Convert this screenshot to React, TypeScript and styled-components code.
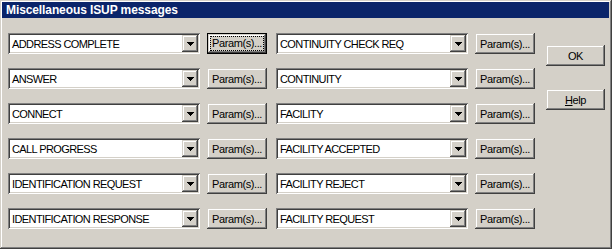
import React from "react";
import styled, { createGlobalStyle, css } from "styled-components";

const GlobalStyle = createGlobalStyle`
  html, body {
    margin: 0;
    padding: 0;
    background: #d4d0c8;
  }
  body {
    font-family: "Liberation Sans", Arial, sans-serif;
    font-size: 11px;
  }
`;

const raised = css`
  box-shadow: inset -1px -1px #404040, inset 1px 1px #d4d0c8,
    inset -2px -2px #808080, inset 2px 2px #ffffff;
`;

const Window = styled.div`
  box-sizing: border-box;
  width: 612px;
  height: 249px;
  padding: 2px 3px 3px 2px;
  background: #d4d0c8;
  display: flex;
  flex-direction: column;
  ${raised};
`;

const TitleBar = styled.div`
  height: 16px;
  line-height: 16px;
  padding-left: 4px;
  background: #0a246a;
  color: #ffffff;
  font-weight: bold;
  font-size: 12px;
  letter-spacing: -0.1px;
  white-space: nowrap;
`;

const Client = styled.div`
  display: flex;
  padding: 15px 0 0 6px;
`;

const Rows = styled.div`
  display: flex;
  flex-direction: column;
  gap: 14px;
`;

const Row = styled.div`
  display: flex;
  align-items: center;
  height: 21px;
`;

const Combo = styled.div<{ $gapAfter: number }>`
  box-sizing: border-box;
  width: 192px;
  height: 21px;
  margin-right: ${(p) => p.$gapAfter}px;
  background: #ffffff;
  display: flex;
  align-items: center;
  box-shadow: inset 1px 1px #808080, inset -1px -1px #ffffff,
    inset 2px 2px #404040, inset -2px -2px #d4d0c8;
  padding: 2px;
`;

const ComboText = styled.span`
  flex: 1;
  padding-left: 2px;
  color: #000000;
  letter-spacing: -0.6px;
  white-space: nowrap;
  overflow: hidden;
`;

const DropButton = styled.div`
  box-sizing: border-box;
  width: 16px;
  height: 17px;
  background: #d4d0c8;
  display: flex;
  align-items: center;
  justify-content: center;
  ${raised};
`;

const ArrowIcon = styled.svg`
  display: block;
  margin-top: 1px;
`;

const Button = styled.div<{ $width: number; $focused?: boolean; $gapAfter?: number }>`
  box-sizing: border-box;
  width: ${(p) => p.$width}px;
  height: 21px;
  margin-right: ${(p) => p.$gapAfter ?? 0}px;
  background: #d4d0c8;
  color: #000000;
  letter-spacing: -0.4px;
  display: flex;
  align-items: center;
  justify-content: center;
  white-space: nowrap;
  ${raised};
  ${(p) =>
    p.$focused &&
    css`
      border: 1px solid #000000;
    `}
`;

const FocusRect = styled.span`
  outline: 1px dotted #000000;
  padding: 0 1px;
  line-height: 13px;
`;

const Side = styled.div`
  display: flex;
  flex-direction: column;
  gap: 23px;
  padding-top: 12px;
  margin-left: 11px;
`;

const left = [
  "ADDRESS COMPLETE",
  "ANSWER",
  "CONNECT",
  "CALL PROGRESS",
  "IDENTIFICATION REQUEST",
  "IDENTIFICATION RESPONSE",
];

const right = [
  "CONTINUITY CHECK REQ",
  "CONTINUITY",
  "FACILITY",
  "FACILITY ACCEPTED",
  "FACILITY REJECT",
  "FACILITY REQUEST",
];

const DownArrow = () => (
  <ArrowIcon width="7" height="4" viewBox="0 0 7 4" shapeRendering="crispEdges">
    <rect x="0" y="0" width="7" height="1" fill="#000" />
    <rect x="1" y="1" width="5" height="1" fill="#000" />
    <rect x="2" y="2" width="3" height="1" fill="#000" />
    <rect x="3" y="3" width="1" height="1" fill="#000" />
  </ArrowIcon>
);

const ComboBox: React.FC<{ value: string; gapAfter: number }> = ({ value, gapAfter }) => (
  <Combo $gapAfter={gapAfter}>
    <ComboText>{value}</ComboText>
    <DropButton>
      <DownArrow />
    </DropButton>
  </Combo>
);

export default function App() {
  return (
    <>
      <GlobalStyle />
      <Window>
        <TitleBar>Miscellaneous ISUP messages</TitleBar>
        <Client>
          <Rows>
            {left.map((name, i) => (
              <Row key={name}>
                <ComboBox value={name} gapAfter={7} />
                <Button $width={60} $gapAfter={9} $focused={i === 0}>
                  {i === 0 ? <FocusRect>Param(s)...</FocusRect> : "Param(s)..."}
                </Button>
                <ComboBox value={right[i]} gapAfter={7} />
                <Button $width={60}>Param(s)...</Button>
              </Row>
            ))}
          </Rows>
          <Side>
            <Button $width={59}>OK</Button>
            <Button $width={59}>
              <span>
                <u>H</u>elp
              </span>
            </Button>
          </Side>
        </Client>
      </Window>
    </>
  );
}
